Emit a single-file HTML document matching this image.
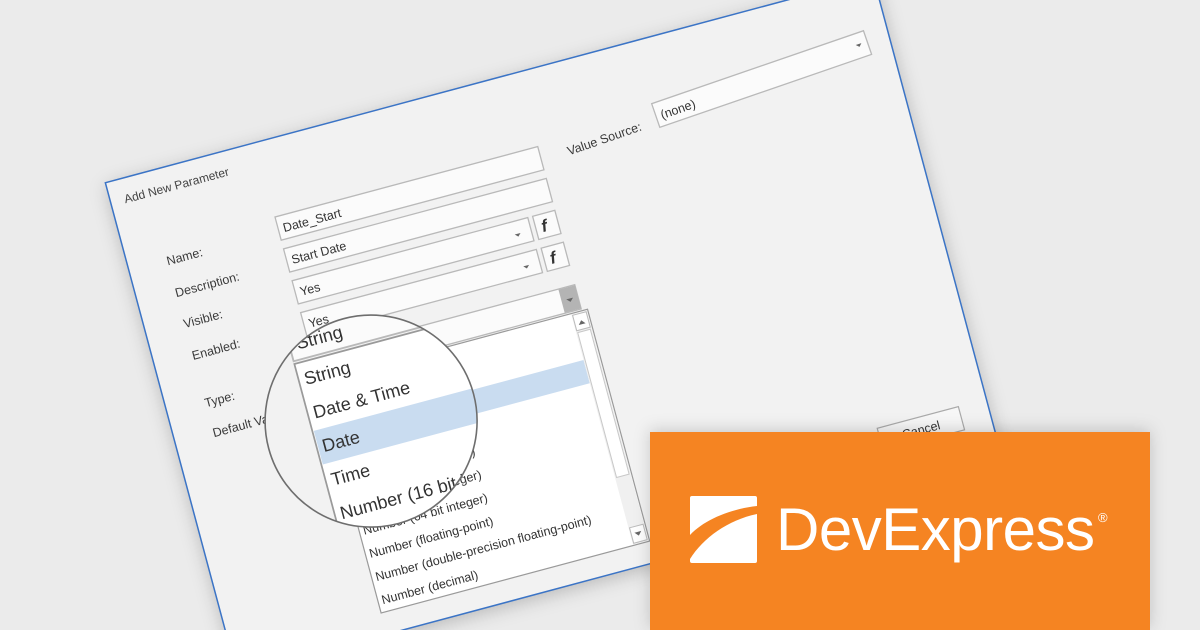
<!DOCTYPE html>
<html><head><meta charset="utf-8">
<style>
html,body{margin:0;padding:0;background:#ebebeb;width:1200px;height:630px;overflow:hidden;}
svg{display:block;}
text{font-family:"Liberation Sans",sans-serif;}
</style></head>
<body>
<svg width="1200" height="630" viewBox="0 0 1200 630" xmlns="http://www.w3.org/2000/svg">
<defs>
  <filter id="sh" x="-20%" y="-20%" width="140%" height="140%">
    <feDropShadow dx="0" dy="4" stdDeviation="9" flood-color="#000" flood-opacity="0.22"/>
  </filter>
  <filter id="sh2" x="-20%" y="-30%" width="140%" height="160%">
    <feDropShadow dx="0" dy="-2" stdDeviation="8" flood-color="#000" flood-opacity="0.18"/>
  </filter>
  <clipPath id="mag" clipPathUnits="userSpaceOnUse"><circle cx="40" cy="222" r="106"/></clipPath>
  <g id="content">
    <rect x="-155" y="-77" width="795" height="509" fill="#f2f2f2" stroke="#3b74c6" stroke-width="1.5"/>
    <text x="-141" y="-52" font-size="12" fill="#444">Add New Parameter</text>
    <g font-size="12.5" fill="#3a3a3a">
      <text x="-116" y="19">Name:</text>
      <text x="-116" y="52">Description:</text>
      <text x="-116" y="84">Visible:</text>
      <text x="-116" y="117">Enabled:</text>
      <text x="-116" y="166">Type:</text>
      <text x="-116" y="197">Default Value:</text>
    </g>
    <g stroke="#b9b9b9" stroke-width="1.3" fill="#fbfbfb">
      <rect x="0" y="0" width="272" height="24"/>
      <rect x="0" y="33" width="272" height="24"/>
      <rect x="0" y="66" width="244" height="24"/>
      <rect x="0" y="99" width="244" height="24"/>
      <rect x="249" y="66" width="23" height="24"/>
      <rect x="249" y="99" width="23" height="24"/>
      <rect x="0" y="143" width="272" height="25"/>
    </g>
    <rect x="255" y="143.5" width="17" height="24" fill="#b4b4b4"/>
    <g fill="#666">
      <path d="M227 79 l6 0 l-3 3 z"/>
      <path d="M227 112 l6 0 l-3 3 z"/>
      <path d="M260 155 l7 0 l-3.5 3.5 z"/>
    </g>
    <g font-family="Liberation Serif,serif" font-style="italic" font-weight="bold" font-size="17" fill="#333">
      <text x="255" y="84">f</text>
      <text x="255" y="117">f</text>
    </g>
    <g font-size="12.5" fill="#333">
      <text x="5" y="17">Date_Start</text>
      <text x="5" y="50">Start Date</text>
      <text x="5" y="83">Yes</text>
      <text x="5" y="116">Yes</text>
      <text x="5" y="161">String</text>
    </g>
    <rect x="0" y="170" width="278" height="240" fill="#fff" stroke="#9a9a9a" stroke-width="1.2"/>
    <rect x="1" y="218" width="260" height="24" fill="#c9dcf0"/>
    <rect x="261" y="171" width="16" height="238" fill="#f0f0f0"/>
    <rect x="262" y="172" width="14" height="16" fill="#fff" stroke="#bbb"/>
    <path d="M265.5 183 l7 0 l-3.5 -4 z" fill="#666"/>
    <rect x="262.5" y="190" width="13" height="150" fill="#fff" stroke="#c8c8c8"/>
    <rect x="262" y="392" width="14" height="16" fill="#fff" stroke="#bbb"/>
    <path d="M265.5 398 l7 0 l-3.5 4 z" fill="#666"/>
    <g font-size="12.5" fill="#333">
      <text x="4" y="186">String</text>
      <text x="4" y="210">Date &amp; Time</text>
      <text x="4" y="234">Date</text>
      <text x="4" y="258">Time</text>
      <text x="4" y="282">Number (16 bit integer)</text>
      <text x="4" y="306">Number (32 bit integer)</text>
      <text x="4" y="330">Number (64 bit integer)</text>
      <text x="4" y="354">Number (floating-point)</text>
      <text x="4" y="378">Number (double-precision floating-point)</text>
      <text x="4" y="402">Number (decimal)</text>
    </g>
    <g transform="rotate(-4 394 0)">
      <text x="299" y="10" font-size="12.5" fill="#3a3a3a">Value Source:</text>
      <rect x="394" y="-12" width="224" height="25" fill="#fbfbfb" stroke="#b9b9b9" stroke-width="1.3"/>
      <text x="399" y="6" font-size="12.5" fill="#333">(none)</text>
      <path d="M606 -1 l6 0 l-3 3 z" fill="#666"/>
    </g>
    <rect x="527" y="360" width="84" height="24" fill="#f7f7f7" stroke="#aaa" stroke-width="1.2"/>
    <text x="569" y="377" font-size="12.5" fill="#333" text-anchor="middle">Cancel</text>
  </g>
</defs>

<rect width="1200" height="630" fill="#ebebeb"/>
<g transform="translate(275,217) rotate(-15)">
  <rect x="-155" y="-77" width="795" height="509" fill="#f2f2f2" filter="url(#sh)"/>
  <use href="#content"/>
  <g clip-path="url(#mag)">
    <g transform="translate(43,221) scale(1.45) translate(-43,-221)">
      <use href="#content"/>
    </g>
  </g>
  <circle cx="40" cy="222" r="106" fill="none" stroke="#6e6e6e" stroke-width="1.6"/>
</g>

<rect x="650" y="432" width="500" height="198" fill="#f58420" filter="url(#sh2)"/>
<g transform="translate(690,496)" fill="#fff">
  <path d="M2 0 H65 Q67 0 67 2 V10 C40 13 14 24 0 39 V2 Q0 0 2 0 Z"/>
  <path d="M67 18 V65 Q67 67 65 67 H2 Q0 67 0 65 V63 C13 42 38 24 67 18 Z"/>
</g>
<text x="776" y="550" font-size="60" fill="#fff" letter-spacing="-0.5">DevExpress</text>
<text x="1098" y="522" font-size="13" fill="#fff">®</text>
</svg>
</body></html>
